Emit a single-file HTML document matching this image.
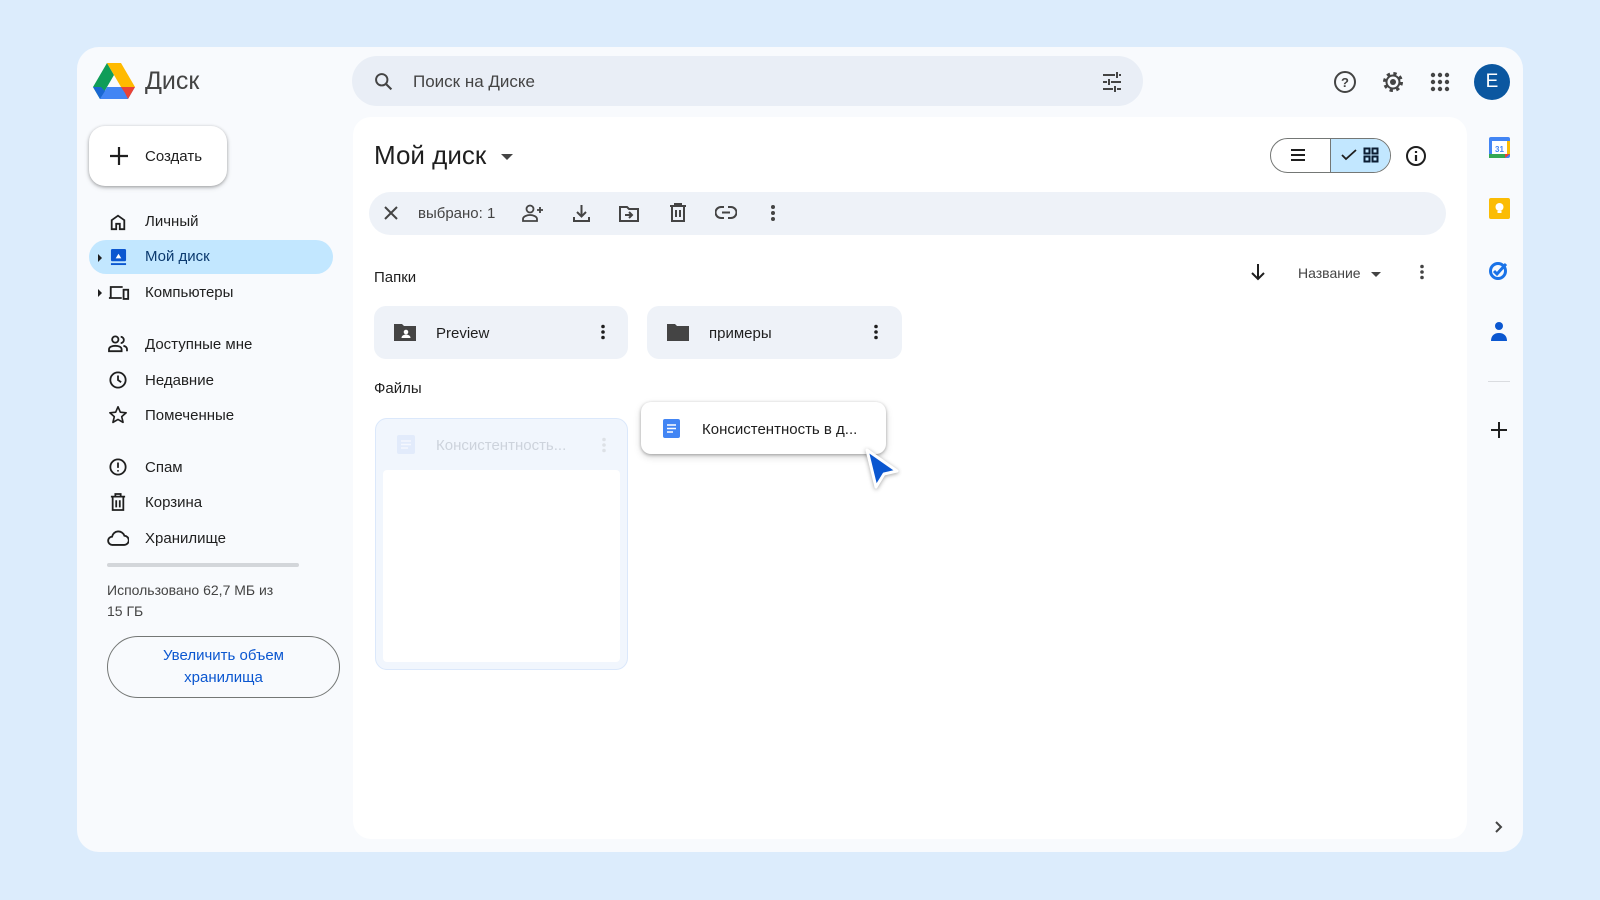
<!DOCTYPE html>
<html><head><meta charset="utf-8"><style>
*{box-sizing:border-box;margin:0;padding:0}
body{width:1600px;height:900px;background:#dcecfc;font-family:"Liberation Sans",Arial,sans-serif;color:#1f1f1f;position:relative;overflow:hidden}
.abs{position:absolute}
.card{left:77px;top:47px;width:1446px;height:805px;background:#f8fafd;border-radius:22px}
.main{left:353px;top:117px;width:1114px;height:722px;background:#fff;border-radius:18px}
.nav{left:145px;font-size:15px;color:#1f1f1f;line-height:20px}
svg{display:block}
</style></head><body>
<div class="abs card"></div>
<div class="abs main"></div>

<svg class="abs" style="left:93px;top:63px" width="42" height="36" viewBox="0 0 42 36">
<polygon points="14,0 0,24 7,36 21,12" fill="#0f9d58"/>
<polygon points="14,0 28,0 42,24 28,24" fill="#ffba00"/>
<polygon points="7,36 35,36 42,24 14,24" fill="#4285f4"/>
<polygon points="35,36 42,24 28,24 32,30" fill="#ea4335"/>
<polygon points="0,24 7,36 12,28 8,24" fill="#1967d2"/>
</svg>
<div class="abs" style="left:145px;top:67px;font-size:25px;color:#444">Диск</div>

<div class="abs" style="left:352px;top:56px;width:791px;height:50px;background:#e9eef6;border-radius:25px"></div>
<svg class="abs" style="left:373px;top:71px" width="21" height="21" viewBox="0 0 24 24"><circle cx="10" cy="10" r="6.5" fill="none" stroke="#444" stroke-width="2.2"/><path d="M15 15l6 6" stroke="#444" stroke-width="2.4"/></svg>
<div class="abs" style="left:413px;top:72px;font-size:17px;color:#444">Поиск на Диске</div>
<svg class="abs" style="left:1100px;top:70px" width="24" height="24" viewBox="0 0 24 24" stroke="#444" stroke-width="2" fill="none"><path d="M3 5h12M19 5h2M3 12h4M11 12h10M3 19h10M17 19h4M17 2v6M9 9v6M15 16v6"/></svg>

<svg class="abs" style="left:1333px;top:70px" width="24" height="24" viewBox="0 0 24 24"><circle cx="12" cy="12" r="10" fill="none" stroke="#444" stroke-width="2"/><text x="12" y="17" font-size="13" text-anchor="middle" fill="#444" font-family="Liberation Sans" font-weight="bold">?</text></svg>
<svg class="abs" style="left:1381px;top:70px" width="24" height="24" viewBox="0 0 24 24"><circle cx="12" cy="12" r="8" fill="none" stroke="#444" stroke-width="4" stroke-dasharray="3.1 3.2"/><circle cx="12" cy="12" r="6.5" fill="none" stroke="#444" stroke-width="2"/><circle cx="12" cy="12" r="3" fill="#444"/></svg>
<svg class="abs" style="left:1430px;top:72px" width="20" height="20" viewBox="0 0 20 20" fill="#444"><circle cx="3" cy="3" r="2.2"/><circle cx="10" cy="3" r="2.2"/><circle cx="17" cy="3" r="2.2"/><circle cx="3" cy="10" r="2.2"/><circle cx="10" cy="10" r="2.2"/><circle cx="17" cy="10" r="2.2"/><circle cx="3" cy="17" r="2.2"/><circle cx="10" cy="17" r="2.2"/><circle cx="17" cy="17" r="2.2"/></svg>
<div class="abs" style="left:1474px;top:64px;width:36px;height:36px;border-radius:50%;background:#0b57a0;color:#fff;font-size:19px;text-align:center;line-height:36px">E</div>

<div class="abs" style="left:89px;top:126px;width:138px;height:60px;background:#fff;border-radius:16px;box-shadow:0 1px 3px rgba(0,0,0,.3),0 2px 6px rgba(0,0,0,.12)"></div>
<svg class="abs" style="left:108px;top:145px" width="22" height="22" viewBox="0 0 22 22"><path d="M11 2v18M2 11h18" stroke="#1f1f1f" stroke-width="2.2"/></svg>
<div class="abs" style="left:145px;top:148px;font-size:15px">Создать</div>

<div class="abs" style="left:89px;top:240px;width:244px;height:34px;background:#c2e7ff;border-radius:17px"></div>
<svg class="abs" style="left:109px;top:213px" width="18" height="18" viewBox="0 0 20 20"><path d="M3 18V8l7-5 7 5v10h-5v-6H8v6z" fill="none" stroke="#1f1f1f" stroke-width="2"/></svg>
<div class="abs nav" style="top:212px">Личный</div>
<div class="abs" style="left:98px;top:254px;width:0;height:0;border-left:4px solid #1f1f1f;border-top:4px solid transparent;border-bottom:4px solid transparent"></div>
<svg class="abs" style="left:110px;top:248px" width="17" height="18" viewBox="0 0 18 19"><rect x="1" y="1" width="16" height="13" rx="1.5" fill="#0b57d0"/><path d="M6 11l3-5 3 5z" fill="#fff"/><rect x="1" y="16" width="16" height="2" fill="#0b57d0"/></svg>
<div class="abs nav" style="top:247px;color:#0b3a6f">Мой диск</div>
<div class="abs" style="left:98px;top:289px;width:0;height:0;border-left:4px solid #1f1f1f;border-top:4px solid transparent;border-bottom:4px solid transparent"></div>
<svg class="abs" style="left:108px;top:284px" width="22" height="17" viewBox="0 0 24 18" fill="none" stroke="#1f1f1f" stroke-width="2"><path d="M3 14V3h13M1 15h14"/><rect x="17" y="6" width="5" height="10"/></svg>
<div class="abs nav" style="top:283px">Компьютеры</div>
<svg class="abs" style="left:108px;top:335px" width="20" height="18" viewBox="0 0 22 20" fill="none" stroke="#1f1f1f" stroke-width="2"><circle cx="8" cy="5" r="3.5"/><path d="M1 18v-2c0-3 4-4 7-4s7 1 7 4v2zM14 2a3.5 3.5 0 010 7M17 12c2 .5 4 1.5 4 4v2"/></svg>
<div class="abs nav" style="top:335px">Доступные мне</div>
<svg class="abs" style="left:109px;top:371px" width="18" height="18" viewBox="0 0 20 20" fill="none" stroke="#1f1f1f" stroke-width="2"><circle cx="10" cy="10" r="8.5"/><path d="M10 5v5l3.5 2.5"/></svg>
<div class="abs nav" style="top:371px">Недавние</div>
<svg class="abs" style="left:108px;top:405px" width="20" height="19" viewBox="0 0 22 21"><path d="M11 2l2.6 6 6.4.6-4.9 4.3 1.5 6.3L11 16l-5.6 3.2 1.5-6.3L2 8.6 8.4 8z" fill="none" stroke="#1f1f1f" stroke-width="1.8" stroke-linejoin="round"/></svg>
<div class="abs nav" style="top:406px">Помеченные</div>
<svg class="abs" style="left:109px;top:458px" width="18" height="18" viewBox="0 0 20 20" fill="none" stroke="#1f1f1f" stroke-width="2"><circle cx="10" cy="10" r="8.5"/><path d="M10 5v6M10 13.5v1.5"/></svg>
<div class="abs nav" style="top:458px">Спам</div>
<svg class="abs" style="left:110px;top:493px" width="16" height="18" viewBox="0 0 18 20" fill="none" stroke="#1f1f1f" stroke-width="2"><path d="M1 4h16M6 4V1h6v3M3 4v15h12V4M7 8v8M11 8v8"/></svg>
<div class="abs nav" style="top:493px">Корзина</div>
<svg class="abs" style="left:107px;top:530px" width="22" height="17" viewBox="0 0 24 18"><path d="M6 16a4.5 4.5 0 01-.5-9A7 7 0 0119 6a5 5 0 01-.5 10z" fill="none" stroke="#1f1f1f" stroke-width="2"/></svg>
<div class="abs nav" style="top:529px">Хранилище</div>
<div class="abs" style="left:107px;top:563px;width:192px;height:4px;background:#d3d6da;border-radius:2px"></div>
<div class="abs" style="left:107px;top:580px;font-size:14px;line-height:21px;color:#444;width:190px">Использовано 62,7 МБ из<br>15 ГБ</div>
<div class="abs" style="left:107px;top:636px;width:233px;height:62px;border:1px solid #747775;border-radius:31px;text-align:center;color:#0b57d0;font-size:15px;line-height:22px;padding-top:8px">Увеличить объем<br>хранилища</div>

<div class="abs" style="left:374px;top:140px;font-size:26px;color:#1f1f1f">Мой диск</div>
<div class="abs" style="left:501px;top:154px;border-top:6px solid #444;border-left:6px solid transparent;border-right:6px solid transparent"></div>

<div class="abs" style="left:1270px;top:138px;width:121px;height:35px;border:1px solid #747775;border-radius:18px;overflow:hidden;background:#fff">
 <div style="position:absolute;left:59px;top:0;width:62px;height:35px;background:#c2e7ff;border-left:1px solid #747775"></div>
</div>
<svg class="abs" style="left:1288px;top:147px" width="20" height="16" viewBox="0 0 20 16"><path d="M3 3h14M3 8h14M3 13h14" stroke="#1f1f1f" stroke-width="2"/></svg>
<svg class="abs" style="left:1341px;top:148px" width="16" height="14" viewBox="0 0 16 14"><path d="M1 7l4 4L15 2" fill="none" stroke="#1f1f1f" stroke-width="1.8"/></svg>
<svg class="abs" style="left:1363px;top:147px" width="16" height="16" viewBox="0 0 16 16" fill="none" stroke="#0b1d33" stroke-width="2"><rect x="1.5" y="1.5" width="5" height="5"/><rect x="9.5" y="1.5" width="5" height="5"/><rect x="1.5" y="9.5" width="5" height="5"/><rect x="9.5" y="9.5" width="5" height="5"/></svg>
<svg class="abs" style="left:1405px;top:145px" width="22" height="22" viewBox="0 0 22 22"><circle cx="11" cy="11" r="9" fill="none" stroke="#1f1f1f" stroke-width="2"/><path d="M11 10v6M11 6v2" stroke="#1f1f1f" stroke-width="2.2"/></svg>

<div class="abs" style="left:369px;top:192px;width:1077px;height:43px;background:#eef2f8;border-radius:22px"></div>
<svg class="abs" style="left:383px;top:205px" width="16" height="16" viewBox="0 0 16 16"><path d="M2 2l12 12M14 2L2 14" stroke="#444" stroke-width="2"/></svg>
<div class="abs" style="left:418px;top:205px;font-size:15px;color:#444">выбрано: 1</div>
<svg class="abs" style="left:522px;top:204px" width="22" height="18" viewBox="0 0 22 18" fill="none" stroke="#444" stroke-width="1.8"><circle cx="8" cy="5" r="3.5"/><path d="M1 17v-2c0-2.5 4-4 7-4s7 1.5 7 4v2zM18 3v6M15 6h6"/></svg>
<svg class="abs" style="left:573px;top:204px" width="17" height="18" viewBox="0 0 17 18" fill="none" stroke="#444" stroke-width="2"><path d="M8.5 1v11M4 8l4.5 4.5L13 8M1 13v4h15v-4"/></svg>
<svg class="abs" style="left:619px;top:204px" width="20" height="18" viewBox="0 0 20 18" fill="none" stroke="#444" stroke-width="2"><path d="M1 3h7l2 2h9v12H1z"/><path d="M6 11h7M10 8l3 3-3 3"/></svg>
<svg class="abs" style="left:670px;top:203px" width="16" height="19" viewBox="0 0 16 19" fill="none" stroke="#444" stroke-width="2"><path d="M0 3h16M5 3V1h6v2M2 3v15h12V3M6 7v7M10 7v7"/></svg>
<svg class="abs" style="left:715px;top:206px" width="22" height="13" viewBox="0 0 22 13" fill="none" stroke="#444" stroke-width="2"><path d="M9 1H6a5 5 0 000 11h3M13 1h3a5 5 0 010 11h-3M7 6.5h8"/></svg>
<svg class="abs" style="left:770px;top:204px" width="6" height="18" viewBox="0 0 6 18" fill="#444"><circle cx="3" cy="3" r="2"/><circle cx="3" cy="9" r="2"/><circle cx="3" cy="15" r="2"/></svg>

<div class="abs" style="left:374px;top:269px;font-size:15px;color:#1f1f1f">Папки</div>
<svg class="abs" style="left:1250px;top:263px" width="16" height="18" viewBox="0 0 16 18"><path d="M8 1v15M2 10l6 6 6-6" fill="none" stroke="#1f1f1f" stroke-width="2"/></svg>
<div class="abs" style="left:1298px;top:265px;font-size:14px;color:#444">Название</div>
<div class="abs" style="left:1371px;top:272px;border-top:5px solid #444;border-left:5px solid transparent;border-right:5px solid transparent"></div>
<svg class="abs" style="left:1419px;top:264px" width="6" height="16" viewBox="0 0 6 16" fill="#444"><circle cx="3" cy="2.5" r="1.8"/><circle cx="3" cy="8" r="1.8"/><circle cx="3" cy="13.5" r="1.8"/></svg>

<div class="abs" style="left:374px;top:306px;width:254px;height:53px;background:#eef2f8;border-radius:12px"></div>
<svg class="abs" style="left:394px;top:323px" width="22" height="18" viewBox="0 0 22 18"><path d="M0 1h8l2 2h12v15H0z" fill="#444"/><circle cx="12" cy="9" r="2.3" fill="#fff"/><path d="M7.5 15c0-2.5 2.5-3.5 4.5-3.5s4.5 1 4.5 3.5z" fill="#fff"/></svg>
<div class="abs" style="left:436px;top:325px;font-size:15px;color:#1f1f1f">Preview</div>
<svg class="abs" style="left:600px;top:324px" width="6" height="16" viewBox="0 0 6 16" fill="#1f1f1f"><circle cx="3" cy="2.5" r="1.8"/><circle cx="3" cy="8" r="1.8"/><circle cx="3" cy="13.5" r="1.8"/></svg>

<div class="abs" style="left:647px;top:306px;width:255px;height:53px;background:#eef2f8;border-radius:12px"></div>
<svg class="abs" style="left:667px;top:324px" width="22" height="17" viewBox="0 0 22 17"><path d="M0 0h8l2 2h12v15H0z" fill="#444"/></svg>
<div class="abs" style="left:709px;top:325px;font-size:15px;color:#1f1f1f">примеры</div>
<svg class="abs" style="left:873px;top:324px" width="6" height="16" viewBox="0 0 6 16" fill="#1f1f1f"><circle cx="3" cy="2.5" r="1.8"/><circle cx="3" cy="8" r="1.8"/><circle cx="3" cy="13.5" r="1.8"/></svg>

<div class="abs" style="left:374px;top:380px;font-size:15px;color:#1f1f1f">Файлы</div>

<div class="abs" style="left:375px;top:418px;width:253px;height:252px;background:#f1f6fd;border:1px solid #dbe8fb;border-radius:12px"></div>
<div class="abs" style="left:383px;top:470px;width:237px;height:192px;background:#fff;border-radius:4px"></div>
<svg class="abs" style="left:397px;top:435px" width="18" height="19" viewBox="0 0 18 19"><rect width="18" height="19" rx="2" fill="#e2ebfb"/><path d="M4 6h10M4 9.5h10M4 13h7" stroke="#f5f8fe" stroke-width="1.6"/></svg>
<div class="abs" style="left:436px;top:437px;font-size:15px;color:#cdd3dc">Консистентность...</div>
<svg class="abs" style="left:601px;top:437px" width="6" height="16" viewBox="0 0 6 16" fill="#dde1e6"><circle cx="3" cy="2.5" r="1.8"/><circle cx="3" cy="8" r="1.8"/><circle cx="3" cy="13.5" r="1.8"/></svg>

<div class="abs" style="left:641px;top:402px;width:245px;height:52px;background:#fff;border-radius:10px;box-shadow:0 1px 3px rgba(0,0,0,.3),0 3px 8px rgba(0,0,0,.15)"></div>
<svg class="abs" style="left:663px;top:419px" width="17" height="19" viewBox="0 0 17 19"><rect width="17" height="19" rx="2" fill="#4285f4"/><path d="M4 6h9M4 9.5h9M4 13h6" stroke="#fff" stroke-width="1.6"/></svg>
<div class="abs" style="left:702px;top:421px;font-size:15px;color:#1f1f1f">Консистентность в д...</div>
<svg class="abs" style="left:860px;top:446px" width="42" height="48" viewBox="0 0 42 48"><path d="M7 4l30 21-13 3-8 13z" fill="#0b57d0" stroke="#fff" stroke-width="3" stroke-linejoin="round" style="filter:drop-shadow(0 1px 2px rgba(0,0,0,.35))"/></svg>

<svg class="abs" style="left:1489px;top:137px" width="21" height="21" viewBox="0 0 21 21"><rect x="0" y="0" width="21" height="21" rx="2" fill="#4285f4"/><rect x="3" y="4" width="15" height="13" fill="#fff"/><rect x="0" y="17" width="16" height="4" fill="#34a853"/><path d="M16 17h5l-5 4z" fill="#ea4335"/><rect x="18" y="4" width="3" height="13" fill="#fbbc04"/><text x="10.5" y="15" font-size="8" text-anchor="middle" fill="#4285f4" font-family="Liberation Sans" font-weight="bold">31</text></svg>
<svg class="abs" style="left:1489px;top:198px" width="21" height="21" viewBox="0 0 21 21"><rect width="21" height="21" rx="2" fill="#fbbc04"/><circle cx="10.5" cy="9" r="4" fill="#fff"/><rect x="8.5" y="13" width="4" height="2" fill="#fff"/></svg>
<svg class="abs" style="left:1488px;top:259px" width="22" height="22" viewBox="0 0 22 22"><circle cx="10" cy="12" r="7.5" fill="none" stroke="#1a73e8" stroke-width="3"/><path d="M6 12l3 3 9-10" fill="none" stroke="#1a73e8" stroke-width="3"/></svg>
<svg class="abs" style="left:1490px;top:321px" width="18" height="22" viewBox="0 0 18 22"><circle cx="9" cy="5" r="4" fill="#0b57d0"/><path d="M1 20c0-5 3-8 8-8s8 3 8 8z" fill="#0b57d0"/></svg>
<div class="abs" style="left:1488px;top:381px;width:22px;height:1px;background:#dadce0"></div>
<svg class="abs" style="left:1490px;top:421px" width="18" height="18" viewBox="0 0 18 18"><path d="M9 1v16M1 9h16" stroke="#1f1f1f" stroke-width="2"/></svg>
<svg class="abs" style="left:1494px;top:820px" width="10" height="14" viewBox="0 0 10 14"><path d="M2 2l5 5-5 5" fill="none" stroke="#444" stroke-width="2"/></svg>
</body></html>
